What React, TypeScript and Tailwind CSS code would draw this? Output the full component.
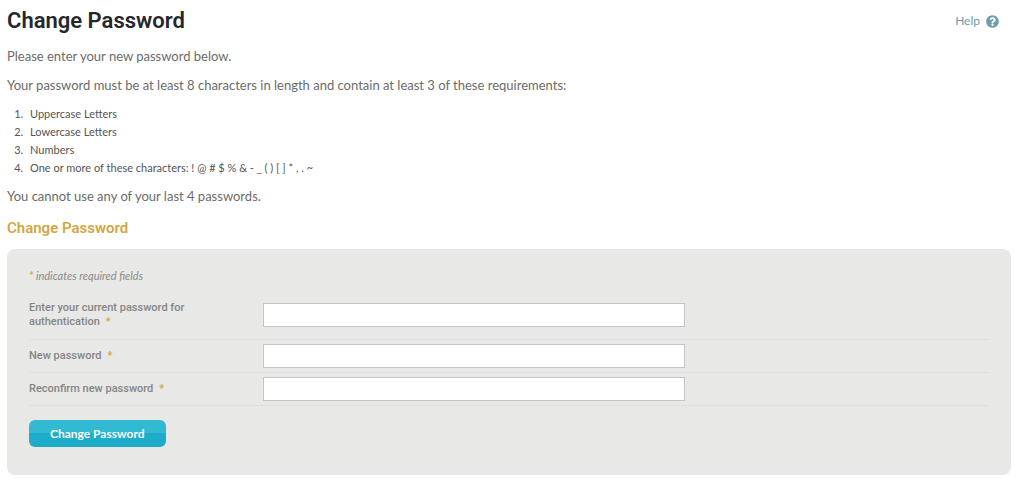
import { useState } from 'react';
import type { FormEvent } from 'react';

const requirements = [
  'Uppercase Letters',
  'Lowercase Letters',
  'Numbers',
  'One or more of these characters: ! @ # $ % & - _ ( ) [ ] * , . ~',
];

export default function App() {
  const [values, setValues] = useState({ current: '', next: '', confirm: '' });

  const handleSubmit = (e: FormEvent) => {
    e.preventDefault();
  };

  return (
    <div className="bg-white pt-2 pb-4 pl-[7px] pr-[13px] font-[Lato,sans-serif] text-[13px] leading-[18px] text-[#6b6b6b]">
      {/* Header */}
      <header className="flex items-center justify-between pr-3">
        <h1 className="font-[Roboto,sans-serif] text-[22px] leading-[26px] font-semibold text-[#25272c]">Change Password</h1>
        <a href="#help" className="flex items-center gap-[6px] text-[12px] text-[#6f9dab]">
          Help
          <HelpIcon />
        </a>
      </header>

      {/* Password rules */}
      <p className="mt-[13px]">Please enter your new password below.</p>
      <p className="mt-[11px]">
        Your password must be at least 8 characters in length and contain at least 3 of these requirements:
      </p>
      <ol className="mt-[11px] list-decimal pl-[19px] text-[11px] text-[#555555]">
        {requirements.map((item) => (
          <li key={item} className="pl-1">{item}</li>
        ))}
      </ol>
      <p className="mt-[10px]">You cannot use any of your last 4 passwords.</p>

      <h2 className="mt-[13px] font-[Roboto,sans-serif] text-[15px] leading-5 font-semibold text-[#d3a744]">Change Password</h2>

      {/* Form */}
      <form onSubmit={handleSubmit} className="mt-[11px] rounded-lg bg-[#e8e8e6] px-[22px] pt-[18px] pb-7">
        <p className="text-[11px] text-[#8a8a8a] italic">
          <span className="font-bold text-[#d3a744]">*</span> indicates required fields
        </p>
        <div className="mt-3">
          <PasswordRow
            id="current-password"
            label="Enter your current password for authentication"
            value={values.current}
            onChange={(current) => setValues({ ...values, current })}
            tall
          />
          <PasswordRow
            id="new-password"
            label="New password"
            value={values.next}
            onChange={(next) => setValues({ ...values, next })}
          />
          <PasswordRow
            id="confirm-password"
            label="Reconfirm new password"
            value={values.confirm}
            onChange={(confirm) => setValues({ ...values, confirm })}
          />
        </div>
        <button
          type="submit"
          className="mt-[14px] h-[27px] rounded-md bg-linear-to-b from-[#31bad2] from-50% to-[#1dadca] to-50% px-[21px] text-[12px] font-bold text-white"
        >
          Change Password
        </button>
      </form>
    </div>
  );
}

interface PasswordRowProps {
  id: string;
  label: string;
  value: string;
  onChange: (value: string) => void;
  tall?: boolean;
}

function PasswordRow({ id, label, value, onChange, tall }: PasswordRowProps) {
  return (
    <div className={`flex items-center border-b border-[#dfdfdd] ${tall ? 'pt-1 pb-[10px]' : 'py-1'}`}>
      <label
        htmlFor={id}
        className="w-[234px] shrink-0 pr-[60px] font-[Roboto,sans-serif] text-[11px] leading-[14px] font-medium text-[#858585]"
      >
        {label}
        <span className="ml-[6px] text-[#d3a744]">*</span>
      </label>
      <input
        id={id}
        type="password"
        value={value}
        onChange={(e) => onChange(e.target.value)}
        className="h-6 w-[44%] border border-[#c4c4c4] bg-white px-2 outline-none"
      />
    </div>
  );
}

function HelpIcon() {
  return (
    <svg viewBox="0 0 512 512" className="size-[13px]" fill="currentColor" aria-hidden="true">
      <path d="M504 256c0 136.997-111.043 248-248 248S8 392.997 8 256C8 119.083 119.043 8 256 8s248 111.083 248 248zM262.655 90c-54.497 0-89.255 22.957-116.549 63.758-3.536 5.286-2.353 12.415 2.715 16.258l34.699 26.31c5.205 3.947 12.621 3.008 16.665-2.122 17.864-22.658 30.113-35.797 57.303-35.797 20.429 0 45.698 13.148 45.698 32.958 0 14.976-12.363 22.667-32.534 33.976C247.128 238.528 216 254.941 216 296v4c0 6.627 5.373 12 12 12h56c6.627 0 12-5.373 12-12v-1.333c0-28.462 83.186-29.647 83.186-106.667 0-58.002-60.165-102-116.531-102zM256 338c-25.365 0-46 20.635-46 46 0 25.364 20.635 46 46 46s46-20.636 46-46c0-25.365-20.635-46-46-46z" />
    </svg>
  );
}
